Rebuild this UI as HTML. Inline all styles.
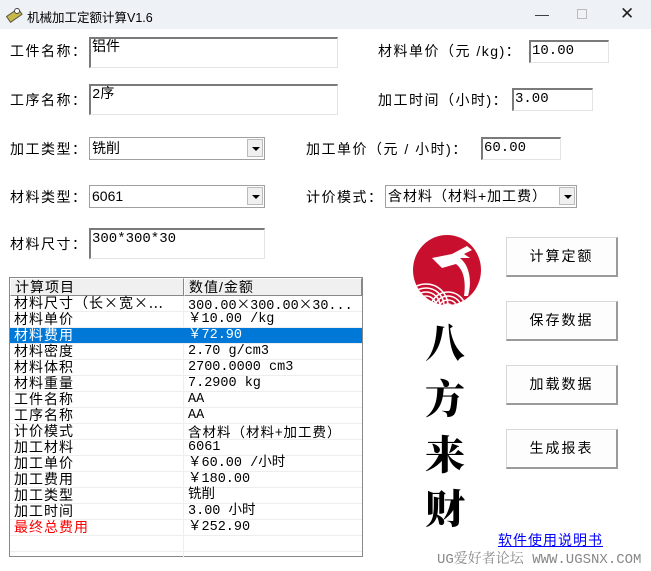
<!DOCTYPE html>
<html><head><meta charset="utf-8"><style>
*{margin:0;padding:0;box-sizing:border-box}
body{width:651px;height:571px;background:#fff;position:relative;overflow:hidden;font-family:"Liberation Sans","Noto Sans CJK SC",sans-serif;color:#000}
.a{position:absolute;white-space:nowrap}
.tb{left:0;top:0;width:651px;height:29px;background:#eef2f7}
.lb{font-size:14px;letter-spacing:1.5px}
.in{position:absolute;background:#fff;border:1px solid #e3e3e3;border-top:2px solid #7a7a7a;border-left:2px solid #7a7a7a;font-size:14px;padding-left:1px;padding-top:1px;line-height:17px;font-family:"Liberation Mono","Noto Sans CJK SC",monospace;white-space:nowrap}
.cb{position:absolute;background:#fff;border:1px solid #a0a0a0;font-size:14px;line-height:20px;padding-left:2px;white-space:nowrap}
.cb i{position:absolute;right:1px;top:1px;width:16px;height:18px;background:#f0f0f0;border:1px solid #bbb}
.cb i:after{content:"";position:absolute;left:4px;top:7px;border-left:4px solid transparent;border-right:4px solid transparent;border-top:4px solid #000}
.btn{position:absolute;left:506px;width:112px;height:40px;background:#fdfdfd;border:1px solid #d8d8d8;border-right:2px solid #9a9a9a;border-bottom:2px solid #9a9a9a;font-size:14px;text-align:center;line-height:37px;letter-spacing:2px}
.lv{position:absolute;left:9px;top:277px;width:354px;height:280px;border:1px solid #888;background:#fff;font-size:14px}
.hd{position:absolute;top:0;height:18px;background:#f0f0f0;border:1px solid #fff;border-right-color:#888;border-bottom-color:#888;line-height:17px;padding-left:4px;letter-spacing:1px}
.r{position:absolute;left:0;width:352px;height:16px;border-bottom:1px solid #eee;line-height:15px}
.r span{position:absolute;top:0}
.c1{left:4px;letter-spacing:1px}
.c2{left:178px;font-family:"Liberation Mono","Noto Sans CJK SC",monospace;font-size:13.5px}
.x{font-family:"Noto Sans CJK SC",sans-serif}
.vl{position:absolute;left:173px;top:18px;width:1px;height:262px;background:#eee}
.big{font-family:"Noto Serif CJK SC",serif;font-weight:900;font-size:40px;left:425px}
</style></head><body>
<div class="a tb"></div>
<svg class="a" style="left:5px;top:6px" width="18" height="18" viewBox="0 0 18 18"><rect x="2" y="6" width="14" height="7" transform="rotate(-35 9 9)" fill="#c8b84a" stroke="#554" stroke-width="1"/><circle cx="12" cy="5" r="2.5" fill="#fff" stroke="#444"/></svg>
<div class="a" style="left:27px;top:7px;font-size:12.5px">机械加工定额计算V1.6</div>
<div class="a" style="left:535px;top:6px;font-size:14px;color:#333">—</div>
<div class="a" style="left:577px;top:9px;width:10px;height:10px;border:1px solid #bbb"></div>
<div class="a" style="left:620px;top:4px;font-size:17px;color:#222">✕</div>

<div class="a lb" style="left:10px;top:41px">工件名称：</div>
<div class="in" style="left:89px;top:37px;width:249px;height:31px">铝件</div>
<div class="a lb" style="left:10px;top:90px">工序名称：</div>
<div class="in" style="left:89px;top:84px;width:249px;height:31px">2序</div>

<div class="a lb" style="left:378px;top:41px">材料单价（元 /kg)：</div>
<div class="in" style="left:529px;top:40px;width:80px;height:23px">10.00</div>
<div class="a lb" style="left:378px;top:90px">加工时间（小时)：</div>
<div class="in" style="left:512px;top:88px;width:81px;height:23px">3.00</div>

<div class="a lb" style="left:10px;top:139px">加工类型：</div>
<div class="cb" style="left:89px;top:137px;width:176px;height:23px">铣削<i></i></div>
<div class="a lb" style="left:306px;top:139px">加工单价（元 / 小时)：</div>
<div class="in" style="left:481px;top:137px;width:80px;height:23px">60.00</div>

<div class="a lb" style="left:10px;top:187px">材料类型：</div>
<div class="cb" style="left:89px;top:185px;width:176px;height:23px">6061<i></i></div>
<div class="a lb" style="left:306px;top:187px">计价模式：</div>
<div class="cb" style="left:385px;top:185px;width:192px;height:23px;letter-spacing:1px">含材料（材料+加工费）<i></i></div>

<div class="a lb" style="left:10px;top:234px">材料尺寸：</div>
<div class="in" style="left:89px;top:228px;width:176px;height:31px">300*300*30</div>

<div class="lv">
<div class="hd" style="left:0;width:174px">计算项目</div>
<div class="hd" style="left:174px;width:178px">数值/金额</div>
<div class="vl"></div>
<div class="r" style="top:18px"><span class="c1 x">材料尺寸（长×宽×...</span><span class="c2">300.00<b class="x" style="font-weight:normal">×</b>300.00<b class="x" style="font-weight:normal">×</b>30...</span></div>
<div class="r" style="top:34px"><span class="c1">材料单价</span><span class="c2">￥10.00 /kg</span></div>
<div class="r" style="top:50px;background:#0078d7;color:#fff"><span class="c1">材料费用</span><span class="c2">￥72.90</span></div>
<div class="r" style="top:66px"><span class="c1">材料密度</span><span class="c2">2.70 g/cm3</span></div>
<div class="r" style="top:82px"><span class="c1">材料体积</span><span class="c2">2700.0000 cm3</span></div>
<div class="r" style="top:98px"><span class="c1">材料重量</span><span class="c2">7.2900 kg</span></div>
<div class="r" style="top:114px"><span class="c1">工件名称</span><span class="c2">AA</span></div>
<div class="r" style="top:130px"><span class="c1">工序名称</span><span class="c2">AA</span></div>
<div class="r" style="top:146px"><span class="c1">计价模式</span><span class="c2 x" style="letter-spacing:1px">含材料（材料+加工费）</span></div>
<div class="r" style="top:162px"><span class="c1">加工材料</span><span class="c2">6061</span></div>
<div class="r" style="top:178px"><span class="c1">加工单价</span><span class="c2">￥60.00 /小时</span></div>
<div class="r" style="top:194px"><span class="c1">加工费用</span><span class="c2">￥180.00</span></div>
<div class="r" style="top:210px"><span class="c1">加工类型</span><span class="c2">铣削</span></div>
<div class="r" style="top:226px"><span class="c1">加工时间</span><span class="c2">3.00 小时</span></div>
<div class="r" style="top:242px;color:#f00"><span class="c1">最终总费用</span><span class="c2" style="color:#000">￥252.90</span></div>
<div class="r" style="top:258px"></div>
</div>

<svg class="a" style="left:412px;top:234px" width="72" height="72" viewBox="0 0 72 72">
<defs><clipPath id="c"><ellipse cx="35" cy="36" rx="34" ry="35"/></clipPath></defs>
<ellipse cx="35" cy="36" rx="34" ry="35" fill="#c8102e"/>
<g clip-path="url(#c)" fill="none" stroke="#fff" stroke-width="1.6">
<circle cx="14" cy="72" r="6"/><circle cx="14" cy="72" r="10"/><circle cx="14" cy="72" r="14"/><circle cx="14" cy="72" r="18"/><circle cx="14" cy="72" r="22"/>
<circle cx="36" cy="76" r="6"/><circle cx="36" cy="76" r="10"/><circle cx="36" cy="76" r="14"/><circle cx="36" cy="76" r="18"/>
</g>
<path d="M20 24 L40 20 L55 12 L60 16 L52 20 L58 24 L48 24 C58 32 60 48 56 62 L52 62 C54 48 52 36 44 30 L30 34 L26 30 Z" fill="#fff"/>
</svg>
<div class="a big" style="top:312px">八</div>
<div class="a big" style="top:368px">方</div>
<div class="a big" style="top:424px">来</div>
<div class="a big" style="top:478px">财</div>

<div class="btn" style="top:237px">计算定额</div>
<div class="btn" style="top:301px">保存数据</div>
<div class="btn" style="top:365px">加载数据</div>
<div class="btn" style="top:429px">生成报表</div>

<div class="a" style="left:498px;top:530px;font-size:14px;color:#00f;text-decoration:underline;letter-spacing:1px">软件使用说明书</div>
<div class="a" style="left:437px;top:548px;font-size:14px;color:#888;font-family:'Liberation Mono','Noto Serif CJK SC',monospace">UG爱好者论坛 WWW.UGSNX.COM</div>
</body></html>
